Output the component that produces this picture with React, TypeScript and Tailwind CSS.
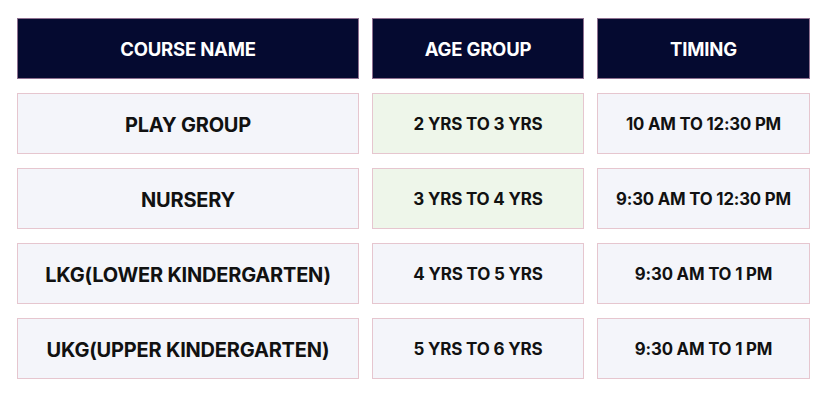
const rows = [
  { course: 'PLAY GROUP', age: '2 YRS TO 3 YRS', time: '10 AM TO 12:30 PM', green: true },
  { course: 'NURSERY', age: '3 YRS TO 4 YRS', time: '9:30 AM TO 12:30 PM', green: true },
  { course: 'LKG(LOWER KINDERGARTEN)', age: '4 YRS TO 5 YRS', time: '9:30 AM TO 1 PM', green: false },
  { course: 'UKG(UPPER KINDERGARTEN)', age: '5 YRS TO 6 YRS', time: '9:30 AM TO 1 PM', green: false },
]

const head = 'flex h-[61px] items-center justify-center border border-[#8e7090] bg-[#050a30] pt-[2px] text-[18.5px] font-bold tracking-[-0.01em] text-white'
const cell = 'flex h-[61px] items-center justify-center border border-[#e6c6cf] pt-[2px] font-bold tracking-[-0.01em] text-[#111111]'

export default function App() {
  return (
    <div
      className="h-[402px] w-[825px] bg-white pl-[17px] pt-[18px]"
      style={{ fontFamily: 'Inter, "Liberation Sans", sans-serif' }}
    >
      <div className="grid grid-cols-[342px_212px_213px] gap-x-[13px] gap-y-[14px]">
        <div className={head}>COURSE NAME</div>
        <div className={head}>AGE GROUP</div>
        <div className={head}>TIMING</div>
        {rows.map((r) => (
          <div key={r.course} className="contents">
            <div className={`${cell} bg-[#f4f5fa] text-[20px]`}>{r.course}</div>
            <div className={`${cell} text-[17px] ${r.green ? 'bg-[#eef6ea]' : 'bg-[#f4f5fa]'}`}>{r.age}</div>
            <div className={`${cell} bg-[#f4f5fa] text-[16.75px]`}>{r.time}</div>
          </div>
        ))}
      </div>
    </div>
  )
}
